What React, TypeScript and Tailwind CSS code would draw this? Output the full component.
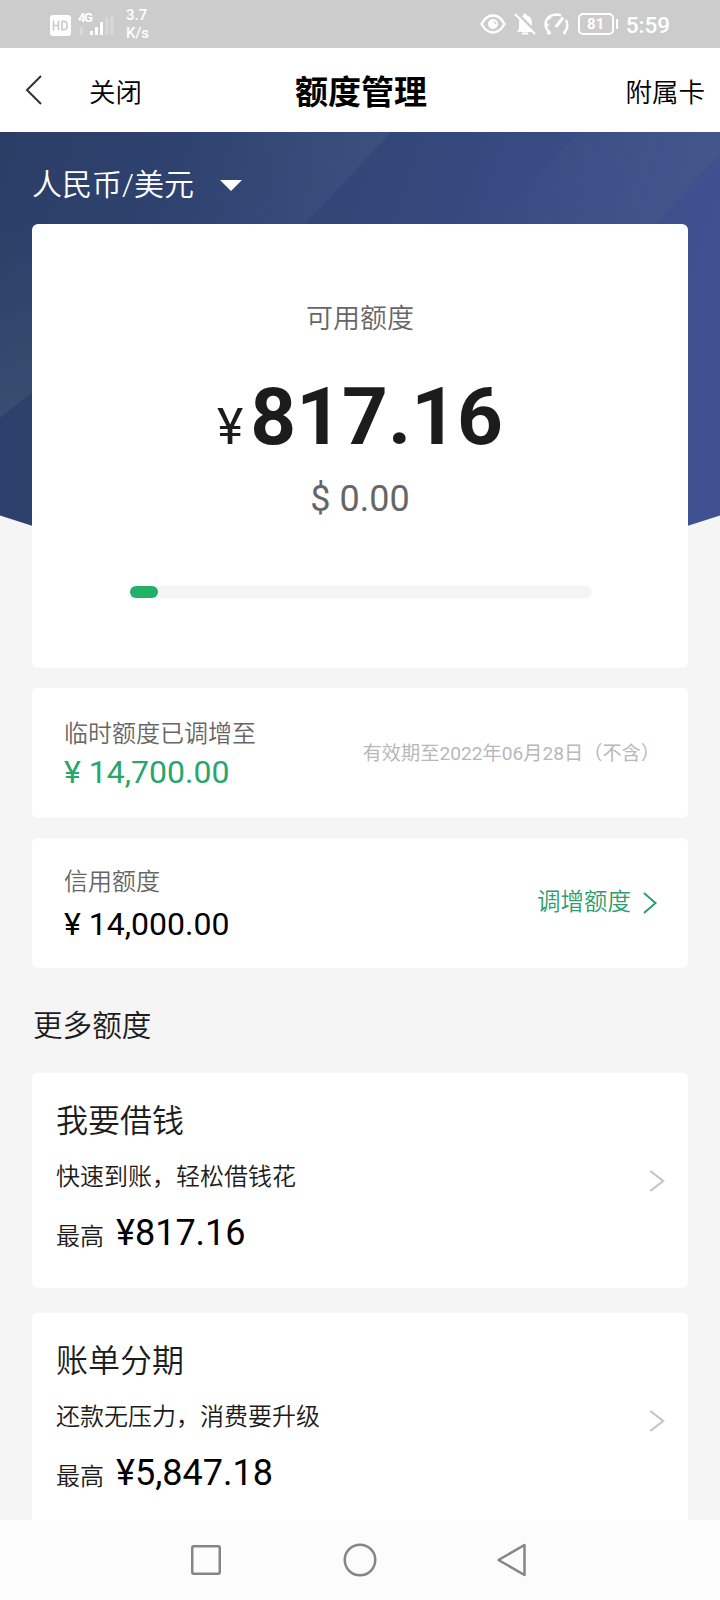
import { ReactNode } from 'react';

const loans = [
    { title: '我要借钱', desc: '快速到账，轻松借钱花', amount: '¥817.16' },
    { title: '账单分期', desc: '还款无压力，消费要升级', amount: '¥5,847.18' },
];

function StatusBar() {
    return (
        <div className="flex h-12 shrink-0 items-center bg-[#cccccc] pr-[50px] pl-[50px] text-white">
            <svg width="21" height="21" viewBox="0 0 21 21" className="mt-[2px]">
                <rect width="21" height="21" rx="3" fill="#fff" />
                <path
                    d="M3.5 5.5v10M8.5 5.5v10M3.5 10.5h5M12 6.3v8.4h1.8q3.4 0 3.4-4.2t-3.4-4.2z"
                    fill="none"
                    stroke="#ccc"
                    strokeWidth="1.7"
                />
            </svg>
            <div className="relative ml-[6px] h-[24px] w-[38px]">
                <span className="absolute top-0 left-px text-[13px] leading-[12px] font-bold tracking-[-1.5px]">
                    4G
                </span>
                <svg
                    width="38"
                    height="24"
                    viewBox="0 0 38 24"
                    className="absolute top-0 left-0"
                >
                    <path d="M14.5 19v4M19.5 15v8M24.5 10v13" stroke="#fff" strokeWidth="3" />
                    <path d="M4.5 15v8M30 6v17M35 4v19" stroke="#d8d8d8" strokeWidth="3" />
                </svg>
            </div>
            <div className="ml-[11px] text-[15px] leading-[18px] font-medium">
                3.7
                <br />
                K/s
            </div>
            <div className="ml-auto flex items-center">
                <svg width="26" height="20" viewBox="0 0 26 20" fill="none" stroke="#fff">
                    <path
                        d="M1.5 10Q6 1.5 13 1.5T24.5 10Q20 18.5 13 18.5T1.5 10z"
                        strokeWidth="2.4"
                    />
                    <circle cx="13" cy="10" r="5" fill="#fff" stroke="none" />
                    <path d="M13.5 7.5q2 0.500 2.500 2.500" stroke="#ccc" strokeWidth="1.2" />
                </svg>
                <svg width="22" height="24" viewBox="0 0 22 24" className="ml-[8px]">
                    <path
                        d="M11 1.5q2 0 2 2 5 1.500 5 7.500v6l2 3H3l2-3v-6Q5 5 9 3.500q0-2 2-2z"
                        fill="#fff"
                    />
                    <path d="M8 21.500h6" stroke="#fff" strokeWidth="2" />
                    <path d="M3 1l20 20" stroke="#ccc" strokeWidth="2.500" />
                    <path d="M1 2l20 20" stroke="#fff" strokeWidth="2" />
                </svg>
                <svg
                    width="25"
                    height="22"
                    viewBox="0 0 25 22"
                    fill="none"
                    stroke="#fff"
                    strokeWidth="2.4"
                    className="ml-[8px]"
                >
                    <path d="M6 20Q1.500 16 1.500 11.500 2 2 12 1.500q3 0 5 1M22 7q2 4 1 8-1 3-3.500 5M1.500 12h3M5 4l1.500 2M3 20h4M19 20h3" />
                    <path d="M19 4.500l-6 8" strokeWidth="3" />
                    <circle cx="12.500" cy="13" r="1.500" fill="#fff" stroke="none" />
                </svg>
                <div className="ml-[9px] flex h-[22px] w-[36px] items-center justify-center rounded-[5px] border-2 border-white">
                    <span className="text-[15px] leading-none font-bold">81</span>
                </div>
                <div className="ml-[2px] h-[10px] w-[2px] bg-white" />
                <span className="mt-px ml-[8px] text-[22.500px] leading-[26px] font-medium">
                    5:59
                </span>
            </div>
        </div>
    );
}

function Header() {
    return (
        <div className="flex h-[84px] shrink-0 items-center bg-white pr-[15px] pl-[24px] text-[26.500px] text-black">
            <svg width="20" height="32" viewBox="0 0 20 32">
                <path
                    d="M17 2L3 16l14 14"
                    fill="none"
                    stroke="#333"
                    strokeWidth="2"
                />
            </svg>
            <span className="mt-[5px] ml-[45px] w-[206px] font-[350]">关闭</span>
            <h1 className="mt-[6px] text-[33px] font-bold">额度管理</h1>
            <span className="mt-[5px] ml-auto font-[350]">附属卡</span>
        </div>
    );
}

function BannerArt() {
    return (
        <svg
            width="720"
            height="420"
            viewBox="0 0 720 420"
            className="absolute top-0 left-0"
        >
            <defs>
                <linearGradient id="base" x1="0" y1="0" x2="1" y2="0.200">
                    <stop offset="0" stopColor="#2b3e66" />
                    <stop offset="0.500" stopColor="#324678" />
                    <stop offset="1" stopColor="#3f5190" />
                </linearGradient>
                <linearGradient id="band" x1="0" y1="0" x2="1" y2="0">
                    <stop offset="0" stopColor="#4a6088" stopOpacity="0" />
                    <stop offset="1" stopColor="#4a6088" stopOpacity="0.400" />
                </linearGradient>
                <linearGradient id="side" x1="0" y1="0" x2="0" y2="1">
                    <stop offset="0" stopColor="#4a6078" stopOpacity="0" />
                    <stop offset="1" stopColor="#4a6078" stopOpacity="0.400" />
                </linearGradient>
                <clipPath id="curve">
                    <path d="M0 0H720V383.500Q540 444 360 444T0 383.500z" />
                </clipPath>
            </defs>
            <g clipPath="url(#curve)">
                <rect width="720" height="420" fill="url(#base)" />
                <path d="M180 0H391L296 102H180z" fill="url(#band)" />
                <path d="M580 0H720V22L645 102H480z" fill="url(#band)" />
                <path d="M0 90H40V254L0 286z" fill="url(#side)" />
            </g>
        </svg>
    );
}

function Arrow({ color, width = 16 }: { color: string; width?: number }) {
    return (
        <svg width={width} height="24" viewBox="0 0 16 24" preserveAspectRatio="none">
            <path d="M2 2l11.500 10L2 22" fill="none" stroke={color} strokeWidth="2" />
        </svg>
    );
}

function QuotaRow({
    label,
    amount,
    amountClass,
    children,
}: {
    label: string;
    amount: string;
    amountClass: string;
    children: ReactNode;
}) {
    return (
        <div className="flex h-[130px] items-center justify-between rounded-md bg-white pr-[30px] pl-[32px]">
            <div className="pt-[3px]">
                <p className="text-[24px] leading-[36px] font-[350] text-[#666]">{label}</p>
                <p className={amountClass}>{amount}</p>
            </div>
            {children}
        </div>
    );
}

export default function App() {
    return (
        <div className="flex h-[1600px] w-[720px] flex-col overflow-hidden bg-[#f5f5f5] font-[Roboto,'Noto_Sans_CJK_SC',sans-serif]">
            <StatusBar />
            <Header />

            <div className="relative min-h-0 flex-1 overflow-hidden px-8">
                <BannerArt />
                <div className="relative">
                    <div className="flex h-[92px] items-center pt-[12px] text-[30px] font-[350] text-white">
                        人民币/美元
                        <svg width="22" height="12" viewBox="0 0 22 12" className="mt-1 ml-[26px]">
                            <path d="M0 0h22L11 11z" fill="#fff" />
                        </svg>
                    </div>

                    <div className="flex h-[444px] flex-col items-center rounded-md bg-white pt-[75px]">
                        <p className="text-[27px] leading-[40px] font-[350] text-[#666]">
                            可用额度
                        </p>
                        <div className="mt-[31px] flex items-baseline text-[#1c1c1c]">
                            <span className="text-[50px] leading-[94px]">¥</span>
                            <span className="ml-[7px] text-[80px] leading-[94px] font-bold">
                                817.16
                            </span>
                        </div>
                        <p className="mt-[4px] text-[36px] leading-[42px] text-[#666]">
                            $ 0.00
                        </p>
                        <div className="mt-[66px] h-[12px] w-[461px] rounded-[4px] bg-[#f5f5f5]">
                            <div className="h-full w-[28px] rounded-full bg-[#21b067]" />
                        </div>
                    </div>

                    <div className="mt-5 flex flex-col gap-5">
                        <QuotaRow
                            label="临时额度已调增至"
                            amount="¥ 14,700.00"
                            amountClass="text-[32px] leading-[41px] text-[#2aa56b]"
                        >
                            <span className="mt-[2px] mr-[-2px] text-[19.200px] text-[#b8b8b8]">
                                有效期至2022年06月28日（不含）
                            </span>
                        </QuotaRow>
                        <QuotaRow
                            label="信用额度"
                            amount="¥ 14,000.00"
                            amountClass="mt-[4px] text-[32px] leading-[41px] text-black"
                        >
                            <div className="flex items-center gap-[11px] text-[23.500px] font-[350] text-[#2d9d6c]">
                                调增额度
                                <Arrow color="#2d9d6c" />
                            </div>
                        </QuotaRow>
                    </div>

                    <h2 className="flex h-[105px] items-center pt-[12px] pl-px text-[29.600px] font-[350] text-[#1c1c1c]">
                        更多额度
                    </h2>

                    <div className="flex flex-col gap-[25px]">
                        {loans.map((loan) => (
                            <div
                                key={loan.title}
                                className="flex h-[215px] items-center justify-between rounded-md bg-white pr-[22px] pl-[24px] text-[#1c1c1c]"
                            >
                                <div className="pb-[8px]">
                                    <p className="text-[32px] leading-[46px] font-[350]">
                                        {loan.title}
                                    </p>
                                    <p className="mt-[15px] text-[24px] leading-[36px] font-[350]">
                                        {loan.desc}
                                    </p>
                                    <div className="mt-[17px] flex items-baseline text-[24px] font-[350]">
                                        最高
                                        <span className="ml-[12px] text-[36px] leading-[42px] font-normal text-black">
                                            {loan.amount}
                                        </span>
                                    </div>
                                </div>
                                <Arrow color="#c4c4c4" width={18} />
                            </div>
                        ))}
                    </div>
                </div>
            </div>

            <div className="flex h-20 shrink-0 items-center justify-center gap-[120px] bg-[#fcfcfc]">
                <svg width="34" height="34" viewBox="0 0 34 34" fill="none" stroke="#858585" strokeWidth="2.500">
                    <rect x="3.250" y="3.250" width="27.500" height="27.500" rx="1.500" />
                </svg>
                <svg width="34" height="34" viewBox="0 0 34 34" fill="none" stroke="#858585" strokeWidth="2.500">
                    <circle cx="17" cy="17" r="15.250" />
                </svg>
                <svg width="34" height="34" viewBox="0 0 34 34" fill="none" stroke="#858585" strokeWidth="2.500" strokeLinejoin="round">
                    <path d="M27.500 2v30L1.500 17z" />
                </svg>
            </div>
        </div>
    );
}
